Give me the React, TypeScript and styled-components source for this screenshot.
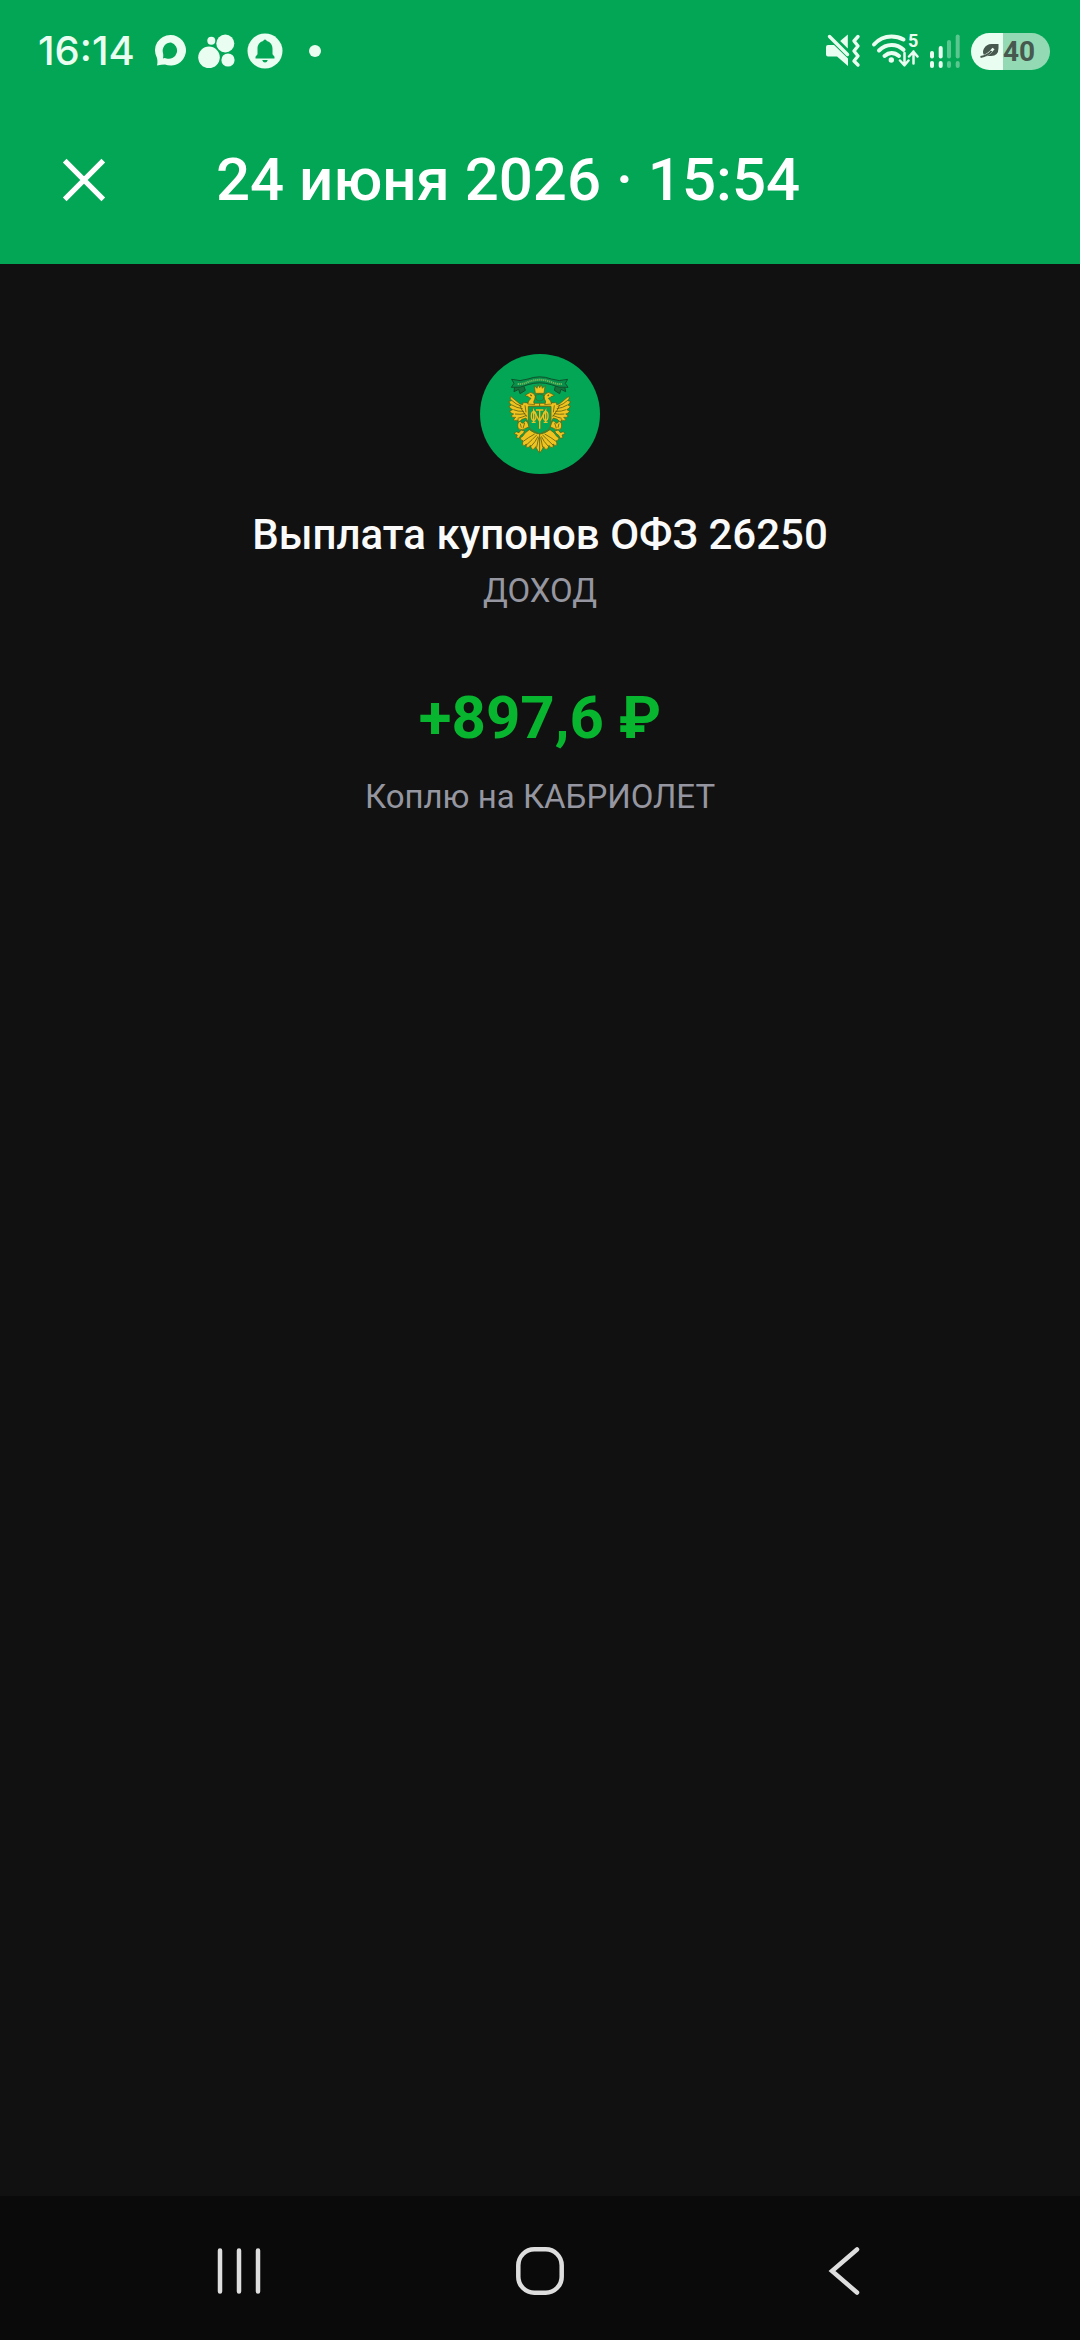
import React from "react";
import styled, { createGlobalStyle } from "styled-components";

const colors = {
  brand: "#02a654",
  page: "#111111",
  nav: "#0a0a0a",
  income: "#08b52f",
  muted: "#9596a0",
  status: "#e9fdf0",
  navIcon: "#dedede",
  gold: "#f0c420",
  engraving: "#5a5c12",
};

const GlobalStyle = createGlobalStyle`
  * { box-sizing: border-box; }
  body {
    margin: 0;
    background: ${colors.page};
    font-family: Roboto, "Noto Sans", sans-serif;
  }
`;

const Screen = styled.div`
  display: flex;
  flex-direction: column;
  min-height: 100vh;
`;

const Header = styled.header`
  background: ${colors.brand};
  color: #ffffff;
`;

const StatusBar = styled.div`
  display: flex;
  justify-content: space-between;
  align-items: center;
  height: 96px;
  padding: 6px 30px 0 38px;
  color: ${colors.status};
`;

const StatusGroup = styled.div<{ $gap: number }>`
  display: flex;
  align-items: center;
  gap: ${(p) => p.$gap}px;
`;

const Clock = styled.time`
  margin-right: 8px;
  font: 500 40px/40px Inter, Roboto, sans-serif;
`;

const MoreDot = styled.span`
  width: 12px;
  height: 12px;
  margin-left: 14px;
  border-radius: 50%;
  background: currentColor;
`;

const Battery = styled.div`
  display: flex;
  align-items: center;
  width: 79px;
  height: 37px;
  padding-left: 9px;
  gap: 4px;
  border-radius: 19px;
  background: linear-gradient(to right, ${colors.status} 40%, #93dab4 40%);
  color: #47584e;
  font-size: 28px;
  font-weight: 700;
  line-height: 37px;
`;

const Toolbar = styled.div`
  display: flex;
  align-items: center;
  height: 168px;
  padding: 0 60px;
  gap: 108px;
`;

const IconButton = styled.button`
  display: grid;
  place-items: center;
  width: 48px;
  height: 48px;
  padding: 0;
  border: 0;
  background: none;
  color: inherit;
`;

const Title = styled.h1`
  margin: 0;
  font-size: 60px;
  font-weight: 500;
  line-height: 72px;
`;

const Content = styled.main`
  display: flex;
  flex: 1;
  flex-direction: column;
  align-items: center;
  padding: 90px 48px;
  text-align: center;
`;

const OperationName = styled.h2`
  margin: 36px 0 10px;
  color: #fafafa;
  font-size: 42px;
  font-weight: 500;
  line-height: 50px;
`;

const Caption = styled.p`
  margin: 0;
  color: ${colors.muted};
  font-size: 33px;
  line-height: 42px;
`;

const Amount = styled.p`
  margin: 70px 0 22px;
  color: ${colors.income};
  font-size: 60px;
  font-weight: 700;
  line-height: 72px;
`;

const NavBar = styled.nav`
  display: flex;
  justify-content: center;
  align-items: center;
  height: 144px;
  padding-top: 6px;
  gap: 253px;
  background: ${colors.nav};
  color: ${colors.navIcon};
`;

const ChatIcon = () => (
  <svg width="31" height="34" viewBox="155 35 31 34" fill="currentColor" aria-hidden="true">
    <path
      fillRule="evenodd"
      d="M170.500 36a15.300 15.300 0 1 1-5.500 29.500Q161.500 65.500 157 66.600Q158 62.500 156.800 58.500A15.300 15.300 0 0 1 170.500 36ZM171 43.500a8.200 8.200 0 0 0-8 10.500q.6 3-.1 5.400q2-.6 3.600.1A8.200 8.200 0 1 0 171 43.500Z"
    />
  </svg>
);

const BubblesIcon = () => (
  <svg width="37" height="38" viewBox="199 32 37 38" fill="currentColor" aria-hidden="true">
    <circle cx="210" cy="57.300" r="10.800" />
    <circle cx="226.300" cy="43.500" r="9" />
    <circle cx="212.300" cy="40.800" r="4" />
    <circle cx="229" cy="60" r="6.600" />
  </svg>
);

const BellIcon = () => (
  <svg width="36" height="36" viewBox="0 0 36 36" aria-hidden="true">
    <circle cx="18" cy="18" r="17.500" fill="currentColor" />
    <g fill={colors.brand}>
      <path d="M18 6.500q1.500 0 1.800 1.600c3.700 1 5.700 4 5.700 7.600v5.500l2 2.600v1.600h-19v-1.600l2-2.600v-5.500c0-3.600 2-6.600 5.700-7.600Q16.500 6.500 18 6.500Z" />
      <path d="M15.200 27h5.600q-.8 2.600-2.800 2.600T15.200 27Z" />
    </g>
  </svg>
);

const MuteIcon = () => (
  <svg width="36" height="38" viewBox="825 32 36 38" fill="currentColor" aria-hidden="true">
    <path d="M828 45h6l14 13.500v7.500l-11-9.500h-9q-2 0-2-2v-7.500q0-2 2-2Z" />
    <path d="M847.800 34.500v14l-7.600-7.400Z" />
    <path d="M829.500 36.500l18 18" stroke="currentColor" strokeWidth="3.400" strokeLinecap="round" />
    <path
      d="M858 36.500l-4 4.500 4 5-4 5 4 5-4 5 4 4"
      fill="none"
      stroke="currentColor"
      strokeWidth="3.400"
      strokeLinecap="round"
      strokeLinejoin="round"
    />
  </svg>
);

const WifiIcon = () => (
  <svg width="48" height="46" viewBox="870 28 48 46" fill="none" stroke="currentColor" strokeLinecap="round" aria-hidden="true">
    <path d="M873 44.500Q880 36.500 890.500 36.500Q897 36.500 902.500 39.500" strokeWidth="4" />
    <path d="M878 50.500Q883.500 45 890.500 45Q897.500 45 902.500 49.800" strokeWidth="4" />
    <path d="M883.500 56Q887 53 890.500 53Q894.500 53 898 56" strokeWidth="4" />
    <circle cx="890.300" cy="60" r="2.700" fill="currentColor" stroke="none" />
    <path d="M903.500 53v12m-4.500-4.500l4.500 4.800 4-4.800M912.500 63.500V51.500m-4.500 5l4.500-4.800 4 4.800" strokeWidth="2.500" strokeLinejoin="round" />
    <text x="907" y="47" fill="currentColor" stroke="none" fontFamily="Roboto, sans-serif" fontSize="18" fontWeight="700">
      5
    </text>
  </svg>
);

const SignalIcon = () => (
  <svg width="32" height="38" viewBox="928 32 32 38" fill="currentColor" aria-hidden="true">
    <rect x="929" y="51" width="4" height="7.500" rx="2" />
    <rect x="937.700" y="46" width="4" height="12.500" rx="2" />
    <rect x="929" y="61" width="4" height="7" rx="2" />
    <rect x="937.700" y="61" width="4" height="7" rx="2" />
    <g opacity=".38">
      <rect x="946" y="40" width="4" height="18.500" rx="2" />
      <rect x="954.700" y="34.500" width="4" height="24" rx="2" />
      <rect x="946" y="61" width="4" height="7" rx="2" />
      <rect x="954.700" y="61" width="4" height="7" rx="2" />
    </g>
  </svg>
);

const LeafIcon = () => (
  <svg width="19" height="16" viewBox="0 0 19 16" aria-hidden="true">
    <path d="M18.500 1v4q0 8-7.500 8H8Q5.500 13.500 4 12Q2 9 4 5.500Q6.500 1 11.500 1Z" fill="#47584e" />
    <path d="M.5 14Q8 13 13.500 5.500" fill="none" stroke={colors.status} strokeWidth="2.600" />
    <path d="M.5 14Q8 12.500 11.500 8" fill="none" stroke="#47584e" strokeWidth="2" />
  </svg>
);

const EagleHalf = () => (
  <g>
    <path d="M209 178H178Q171 176 164 176Q156 174 158 182L150 180L122 157Q118 163 125 170L117 172Q117 179 125 183L117 186Q119 194 128 197L119 201Q122 209 131 210L123 216Q128 222 137 220L130 227Q137 232 145 227L143 234Q151 233 156 226L168 222L178 240V187H209Z" />
    <path d="M194 182Q188 174 194 166Q199 156 191 149Q182 142 174 149L165 154Q170 157 174 157Q177 162 183 163Q175 170 173 180Z" />
    <path d="M151 231Q139 237 145 254Q157 262 169 252L178 248Q174 232 166 230L160 238L154 236Z" />
    <path d="M153 258L147 266L138 263L133 269L142 273L139 281L147 283L152 274L160 268L164 261Z" />
    <path d="M178 257Q166 264 157 278L151 281Q151 290 159 290L157 302Q163 308 169 300L168 309Q176 314 181 304L185 315Q193 320 197 308L204 321L209 326V270Q193 269 178 257Z" />
    <g fill="none" strokeWidth="2.400">
      <path d="M125 169Q137 181 155 187M126 183Q140 192 158 194M130 197Q143 203 162 202M135 210Q149 212 166 209M143 223Q156 220 170 214" />
      <path d="M149 183L156 198L170 218M165 184L168 205" />
      <path d="M151 239L154 251M164 237L159 253" />
      <path d="M201 272Q189 285 168 304M204 277Q197 293 183 307M206 280L200 310M194 270Q174 281 160 292" />
      <path d="M181 152L185 156" strokeWidth="3.500" />
    </g>
  </g>
);

const Emblem = () => (
  <svg width="120" height="120" viewBox="30 30 360 360" role="img" aria-label="Минфин России">
    <circle cx="210" cy="210" r="180" fill={colors.brand} />
    <g stroke="#11512b" strokeWidth="3" strokeLinejoin="round">
      <path d="M134 127L132 143L146 136L150 149L166 139L162 127ZM284 127L287 143L273 136L269 149L253 139L256 127Z" fill="#14733d" />
      <path
        d="M125 106Q151 114 174 105Q209 92 244 105Q267 114 293 106L286 118L294 130Q266 133 244 122Q209 111 174 122Q152 133 124 130L132 118Z"
        fill="#078f4b"
      />
      <path d="M143 120Q159 121 174 114Q209 101 244 114Q259 121 276 120" fill="none" stroke="#72b85b" strokeWidth="6" strokeDasharray="4 2" />
    </g>
    <g fill={colors.gold} stroke={colors.engraving} strokeWidth="2" strokeLinejoin="round">
      <EagleHalf />
      <g transform="translate(418 0) scale(-1 1)">
        <EagleHalf />
      </g>
      <path d="M193 125L201 133L204 122L209 131L214 122L217 133L225 125L222 148H196Z" />
      <path d="M196 154Q209 147 222 154L220 166Q209 176 198 166Z" fill={colors.brand} />
    </g>
    <path d="M175 187H243V240Q242 256 225 262L209 270L193 262Q176 256 175 240Z" fill={colors.brand} stroke="#6b7019" strokeWidth="3" />
    <g fill="none" stroke="#6d7a18" strokeWidth="6">
      <path d="M191 234V200L209 232L227 200V234M198 198H220M209 198V254" />
      <ellipse cx="191" cy="216" rx="7" ry="13" />
      <ellipse cx="227" cy="216" rx="7" ry="13" />
    </g>
    <g fill="none" stroke="#e0c62c" strokeWidth="4">
      <path d="M185 235H197M221 235H233M191 234V200L209 232L227 200V234M198 198H220M209 198V254" />
      <ellipse cx="191" cy="216" rx="7" ry="13" />
      <ellipse cx="227" cy="216" rx="7" ry="13" />
    </g>
  </svg>
);

const CloseIcon = () => (
  <svg width="48" height="48" viewBox="0 0 48 48" stroke="currentColor" strokeWidth="5.200" aria-hidden="true">
    <path d="M4.700 4.700L43.300 43.300M43.300 4.700L4.700 43.300" />
  </svg>
);

const RecentsIcon = () => (
  <svg width="48" height="48" viewBox="0 0 48 48" stroke="currentColor" strokeWidth="4.500" strokeLinecap="round" aria-hidden="true">
    <path d="M5 3.500V44.500M24 3.500V44.500M43 3.500V44.500" />
  </svg>
);

const HomeIcon = () => (
  <svg width="48" height="48" viewBox="0 0 48 48" fill="none" stroke="currentColor" strokeWidth="4.500" aria-hidden="true">
    <rect x="2.300" y="2.300" width="43.400" height="43.400" rx="16" />
  </svg>
);

const BackIcon = () => (
  <svg
    width="48"
    height="48"
    viewBox="0 0 48 48"
    fill="none"
    stroke="currentColor"
    strokeWidth="4.500"
    strokeLinecap="round"
    aria-hidden="true"
  >
    <path d="M40 2.500L15 24L40 45.500" />
  </svg>
);

export default function App() {
  return (
    <Screen>
      <GlobalStyle />
      <Header>
        <StatusBar>
          <StatusGroup $gap={12}>
            <Clock>16:14</Clock>
            <ChatIcon />
            <BubblesIcon />
            <BellIcon />
            <MoreDot />
          </StatusGroup>
          <StatusGroup $gap={10}>
            <MuteIcon />
            <WifiIcon />
            <SignalIcon />
            <Battery>
              <LeafIcon />
              40
            </Battery>
          </StatusGroup>
        </StatusBar>
        <Toolbar>
          <IconButton type="button" aria-label="Закрыть">
            <CloseIcon />
          </IconButton>
          <Title>24 июня 2026 · 15:54</Title>
        </Toolbar>
      </Header>
      <Content>
        <Emblem />
        <OperationName>Выплата купонов ОФЗ 26250</OperationName>
        <Caption>ДОХОД</Caption>
        <Amount>+897,6 ₽</Amount>
        <Caption>Коплю на КАБРИОЛЕТ</Caption>
      </Content>
      <NavBar>
        <IconButton type="button" aria-label="Недавние приложения">
          <RecentsIcon />
        </IconButton>
        <IconButton type="button" aria-label="Главный экран">
          <HomeIcon />
        </IconButton>
        <IconButton type="button" aria-label="Назад">
          <BackIcon />
        </IconButton>
      </NavBar>
    </Screen>
  );
}
